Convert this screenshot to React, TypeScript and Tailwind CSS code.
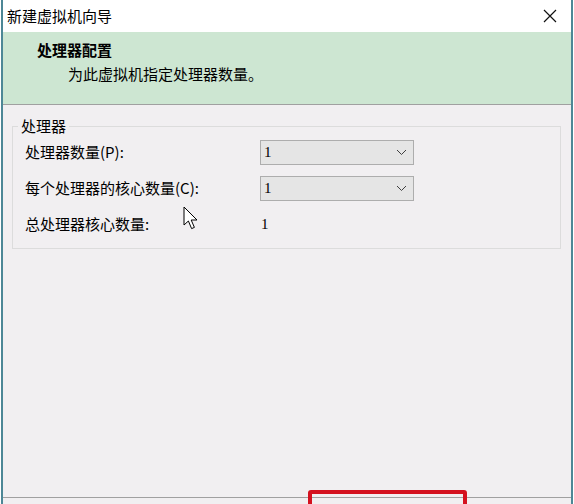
import React from 'react';

const cjk = { fontFamily: '"Microsoft YaHei", "Noto Sans CJK SC", "Liberation Sans", sans-serif' };

function Chevron() {
  return (
    <svg width="11" height="7" viewBox="0 0 11 7" className="shrink-0">
      <path d="M1 1 L5.5 5.5 L10 1" fill="none" stroke="#404040" strokeWidth="1" />
    </svg>
  );
}

function Select({ value }: { value: string }) {
  return (
    <div className="flex h-[25px] w-[154px] items-center justify-between border border-[#adadad] bg-[#e5e5e5] pl-[3px] pr-[6px]">
      <span className="text-[15px] text-black" style={{ fontFamily: '"Liberation Serif", serif' }}>
        {value}
      </span>
      <Chevron />
    </div>
  );
}

function Cursor() {
  return (
    <svg width="16" height="25" viewBox="0 0 16 25" className="absolute left-[183px] top-[206px]">
      <path
        d="M1 1 L1 19 L5.4 15 L8.6 22.6 L11.4 21.4 L8.2 14 L14 14 Z"
        fill="#fff"
        stroke="#000"
        strokeWidth="1"
        strokeLinejoin="miter"
      />
    </svg>
  );
}

export default function App() {
  return (
    <div className="relative h-[504px] w-[574px] overflow-hidden bg-white" style={cjk}>
      <div className="ml-[1px] flex h-full w-[572px] flex-col border-x-2 border-[#4d8796]">
        {/* title bar */}
        <div className="flex h-[32px] items-center justify-between bg-white pl-[4px] pr-[14px]">
          <span className="text-[15px] text-black">新建虚拟机向导</span>
          <svg width="14" height="14" viewBox="0 0 14 14">
            <path d="M1 1 L13 13 M13 1 L1 13" stroke="#111" strokeWidth="1.2" />
          </svg>
        </div>

        {/* header */}
        <div className="flex h-[73px] flex-col border-b border-[#a0a0a0] bg-[#cde6d2] pl-[34px] pt-[7px]">
          <span className="text-[15px] font-bold leading-[22px] text-black">处理器配置</span>
          <span className="ml-[31px] mt-[2px] text-[15px] leading-[22px] text-black">
            为此虚拟机指定处理器数量。
          </span>
        </div>

        {/* body */}
        <div className="flex flex-1 flex-col bg-[#f1eff1] pl-[9px] pr-[10px] pt-[12px]">
          <div className="relative mt-[9px] h-[123px] border border-[#dcdcdc]">
            <span className="absolute left-[5px] top-[-12px] bg-[#f1eff1] px-[3px] text-[15px] leading-[22px] text-black">
              处理器
            </span>
            <div className="flex flex-col pl-[12px] pt-[13px]">
              <div className="flex h-[25px] items-center">
                <span className="w-[235px] text-[15px] text-black">处理器数量(P):</span>
                <Select value="1" />
              </div>
              <div className="mt-[11px] flex h-[25px] items-center">
                <span className="w-[235px] text-[15px] text-black">每个处理器的核心数量(C):</span>
                <Select value="1" />
              </div>
              <div className="mt-[11px] flex h-[25px] items-center">
                <span className="w-[236px] text-[15px] text-black">总处理器核心数量:</span>
                <span className="text-[15px] text-black" style={{ fontFamily: '"Liberation Serif", serif' }}>
                  1
                </span>
              </div>
            </div>
          </div>
          <div className="flex-1" />
        </div>

        {/* footer */}
        <div className="h-[7px] border-t border-[#a0a0a0] bg-[#f1eff1]" />
      </div>

      <Cursor />
      <div className="absolute left-[308px] top-[490px] h-[24px] w-[159px] rounded-[3px] border-4 border-[#d4111f]" />
    </div>
  );
}
